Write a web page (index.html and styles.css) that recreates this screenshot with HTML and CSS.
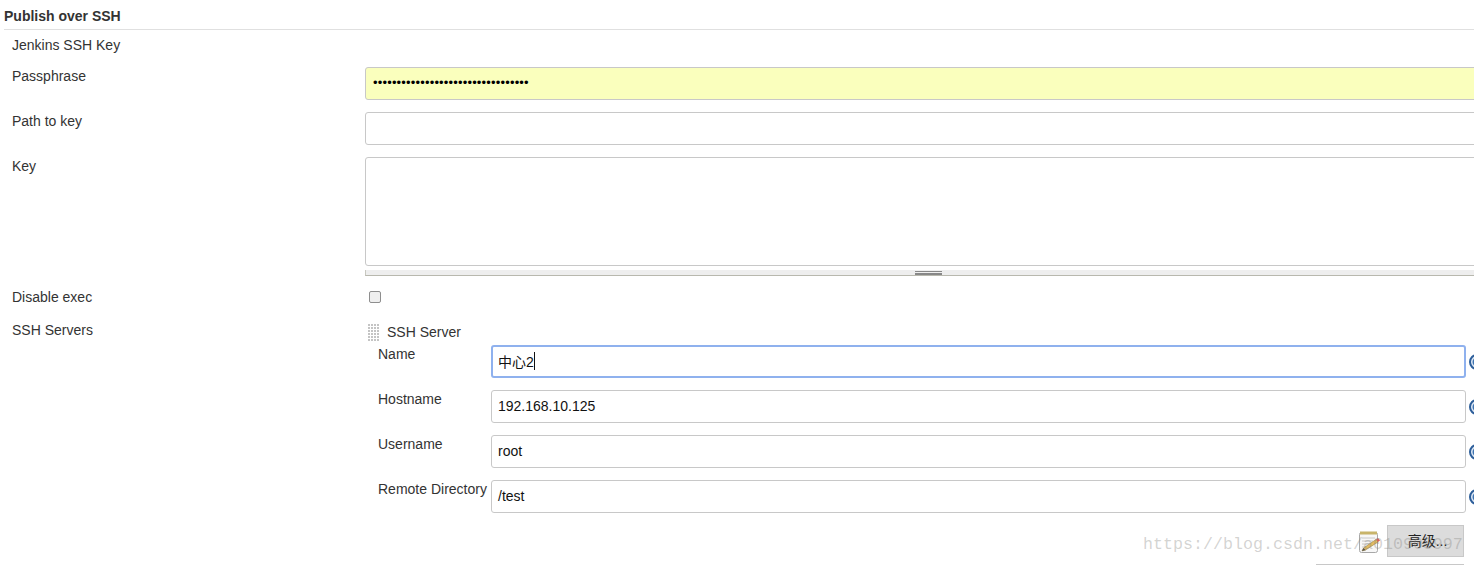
FILE: index.html
```html
<!DOCTYPE html>
<html lang="en">
<head>
<meta charset="utf-8">
<title>Publish over SSH</title>
<link rel="stylesheet" href="styles.css">
</head>
<body>
<svg class="defs" width="0" height="0" aria-hidden="true">
  <defs>
    <symbol id="help" viewBox="0 0 16 16">
      <circle cx="8" cy="8" r="7" fill="#dfe8f4" stroke="#2d5e9a" stroke-width="2"/>
      <circle cx="8" cy="8" r="4.500" fill="#3f74b0"/>
    </symbol>
  </defs>
</svg>
<main class="page">
  <h2 class="section-title">Publish over SSH</h2>
  <div class="row row-key"><div class="label">Jenkins SSH Key</div></div>
  <div class="row row-field">
    <div class="label">Passphrase</div>
    <input class="input input-wide input-filled" type="text" value="•••••••••••••••••••••••••••••••••" readonly>
  </div>
  <div class="row row-field">
    <div class="label">Path to key</div>
    <input class="input input-wide" type="text" readonly>
  </div>
  <div class="row row-area">
    <div class="label">Key</div>
    <div class="area-wrap">
      <div class="textarea"></div>
      <div class="grip"><span class="grip-lines"></span></div>
    </div>
  </div>
  <div class="row row-check">
    <div class="label">Disable exec</div>
    <span class="checkbox"></span>
  </div>
  <div class="row row-servers">
    <div class="label">SSH Servers</div>
    <div class="server">
      <div class="server-head">
        <svg class="handle" width="12" height="18" viewBox="0 0 12 18" aria-hidden="true">
          <defs><pattern id="dots" width="3" height="3" patternUnits="userSpaceOnUse"><rect width="2" height="2" fill="#c4c4c4"/></pattern></defs>
          <rect width="12" height="18" fill="url(#dots)"/>
        </svg>
        <span class="server-title">SSH Server</span>
      </div>
      <div class="server-field">
        <div class="sublabel">Name</div>
        <div class="input input-focus"><span>中心2</span><i class="caret"></i></div>
        <svg class="help" aria-hidden="true"><use href="#help"/></svg>
      </div>
      <div class="server-field">
        <div class="sublabel">Hostname</div>
        <div class="input"><span>192.168.10.125</span></div>
        <svg class="help" aria-hidden="true"><use href="#help"/></svg>
      </div>
      <div class="server-field">
        <div class="sublabel">Username</div>
        <div class="input"><span>root</span></div>
        <svg class="help" aria-hidden="true"><use href="#help"/></svg>
      </div>
      <div class="server-field">
        <div class="sublabel">Remote Directory</div>
        <div class="input"><span>/test</span></div>
        <svg class="help" aria-hidden="true"><use href="#help"/></svg>
      </div>
      <div class="actions">
        <svg class="notepad" width="23" height="23" viewBox="0 0 23 23" aria-hidden="true">
          <rect x="1.500" y="1.500" width="18" height="20" rx="2" fill="#f7f7f7" stroke="#a8a8a8"/>
          <rect x="2" y="0.500" width="17" height="3" fill="#c8b46a"/>
          <path d="M4 7h13M4 10h11M4 13h8M4 16h5M4 19h4" stroke="#c8c8c8"/>
          <path d="M4 20l1.500-3L18 8.500l2 2.500L7.500 19z" fill="#e3bc62" stroke="#8c7434" stroke-width=".5"/>
          <path d="M18 8.500l2 2.500 2-1.500-2-2.500z" fill="#d8605a"/>
          <path d="M4 20l1.500-3 2 2z" fill="#555"/>
        </svg>
        <button class="btn" type="button">高级...</button>
      </div>
      <div class="next-btn"></div>
    </div>
  </div>
</main>
<div class="watermark">https://blog.csdn.net/a010908997</div>
</body>
</html>
```
FILE: styles.css
```css
* { box-sizing: border-box; }
html, body { margin: 0; height: 565px; overflow: hidden; background: #fff; }
body {
  position: relative;
  font-family: "Liberation Sans", Arial, "Noto Sans CJK SC", sans-serif;
  font-size: 14px;
  color: #333;
}
.defs { position: absolute; }
.page { width: 1474px; padding-left: 4px; }
.section-title {
  margin: 0;
  height: 30px;
  padding-top: 8px;
  font-size: 14px;
  line-height: 16px;
  font-weight: bold;
  color: #333;
  border-bottom: 1px solid #e0e0e0;
}
.row { display: flex; padding-left: 8px; }
.label { width: 353px; flex: none; line-height: 16px; }
.row-key { height: 37px; padding-top: 7px; }
.row-field { height: 45px; }
.row-field .label { padding-top: 1px; }
.input {
  display: flex;
  align-items: center;
  height: 33px;
  flex: 1 1 auto;
  min-width: 0;
  padding: 0 6px 2px;
  font: inherit;
  color: #111;
  background: #fff;
  border: 1px solid #c8c8c8;
  border-radius: 3px;
  outline: none;
}
.input-wide { flex: none; width: 1120px; }
.input-filled { background: #faffbd; font-size: 13px; letter-spacing: .17px; padding-left: 7px; color: #000; }
.input-focus { border: 2px solid #8fb1ee; padding: 0 5px 2px; }
.caret { display: inline-block; width: 1px; height: 18px; background: #111; }
.row-area { height: 130px; }
.row-area .label { padding-top: 1px; }
.area-wrap { width: 1120px; flex: none; }
.textarea { height: 109px; border: 1px solid #c8c8c8; border-radius: 3px; background: #fff; }
.grip {
  display: flex;
  height: 6px;
  margin-top: 4px;
  padding: 1px 0 0 549px;
  background: #eee;
  border-bottom: 1px solid #b8b8ae;
  border-left: 1px solid #c8c8c0;
}
.grip-lines { display: block; width: 27px; height: 4px; border-top: 1px solid #888; border-bottom: 2px solid #888; }
.row-check { height: 33px; }
.row-check .label { padding-top: 2px; }
.row-check .checkbox { margin: 4px 0 0 4px; }
.checkbox {
  display: block;
  width: 12px;
  height: 12px;
  background: #efefef;
  border: 1px solid #8e8e8e;
  border-radius: 2px;
}
.row-servers { align-items: flex-start; }
.server { flex: none; width: 1120px; }
.row-servers .label { padding-top: 2px; }
.server-head { display: flex; align-items: center; height: 18px; padding: 6px 0 0 3px; gap: 7px; line-height: 16px; }
.handle { flex: none; margin-top: 2px; }
.server-field { display: flex; height: 45px; padding: 0 0 0 13px; }
.server-head + .server-field { margin-top: 7px; }
.sublabel { width: 113px; flex: none; line-height: 16px; padding-top: 1px; white-space: nowrap; }
.server-field .input { width: 975px; flex: none; }
.help { flex: none; margin: 9px 0 0 3px; width: 16px; height: 16px; }
.actions { display: flex; justify-content: flex-end; align-items: flex-start; width: 1099px; gap: 6px; }
.notepad { margin-top: 6px; flex: none; }
.btn {
  width: 77px;
  height: 32px;
  padding: 0 0 3px 4px;
  font: inherit;
  color: #222;
  background: #dcdcdc;
  border: 1px solid #c8c8c8;
}
.next-btn { width: 148px; height: 20px; margin: 7px 0 0 951px; border: 1px solid #c8c8c8; border-bottom: 0; }
.watermark {
  position: absolute;
  left: 1143px;
  top: 534px;
  font-family: "Liberation Mono", "DejaVu Sans Mono", monospace;
  font-size: 16.670px;
  line-height: 22px;
  white-space: nowrap;
  color: rgba(130, 130, 125, .35);
  pointer-events: none;
}
```
